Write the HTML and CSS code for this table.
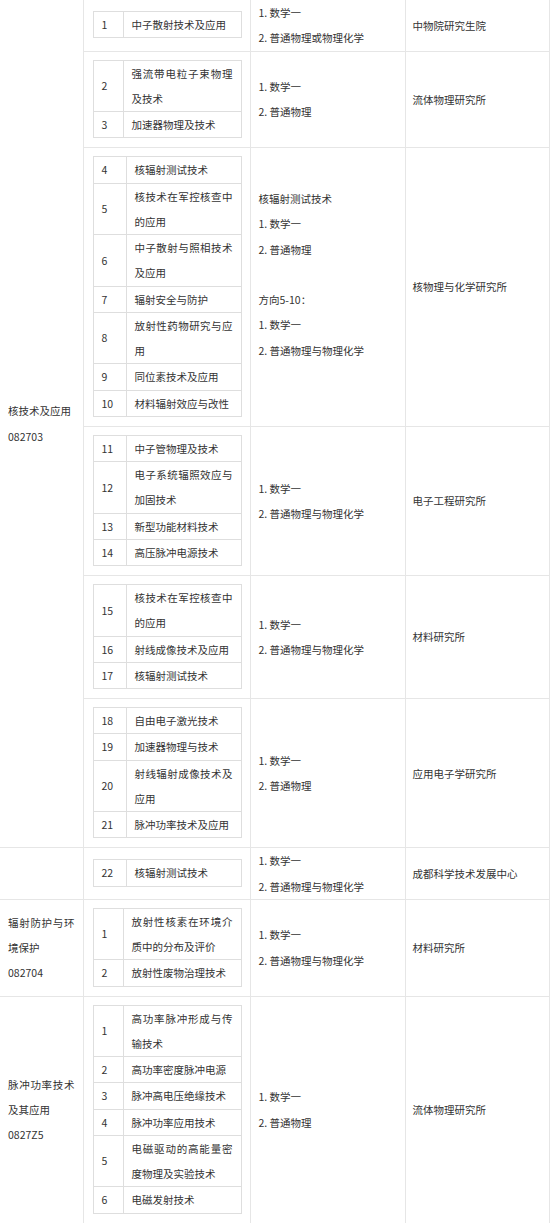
FILE: index.html
```html
<!DOCTYPE html>
<html lang="zh-CN">
<head>
<meta charset="utf-8">
<title>招生专业目录</title>
<link rel="stylesheet" href="styles.css">
</head>
<body>
<table class="plan">
  <colgroup>
    <col class="c-major">
    <col class="c-dir">
    <col class="c-exam">
    <col class="c-inst">
  </colgroup>
  <tbody>
    <tr>
      <td class="major" rowspan="6"><p>核技术及应用</p><p>082703</p></td>
      <td class="dirs">
        <table class="sub">
          <colgroup><col class="n"><col></colgroup>
          <tr><td class="num">1</td><td class="name">中子散射技术及应用</td></tr>
        </table>
      </td>
      <td class="exam"><p>1. 数学一</p><p>2. 普通物理或物理化学</p></td>
      <td class="inst">中物院研究生院</td>
    </tr>
    <tr>
      <td class="dirs">
        <table class="sub">
          <colgroup><col class="n"><col></colgroup>
          <tr><td class="num">2</td><td class="name">强流带电粒子束物理及技术</td></tr>
          <tr><td class="num">3</td><td class="name">加速器物理及技术</td></tr>
        </table>
      </td>
      <td class="exam"><p>1. 数学一</p><p>2. 普通物理</p></td>
      <td class="inst">流体物理研究所</td>
    </tr>
    <tr>
      <td class="dirs">
        <table class="sub sub-wide">
          <colgroup><col class="n"><col></colgroup>
          <tr><td class="num">4</td><td class="name">核辐射测试技术</td></tr>
          <tr><td class="num">5</td><td class="name">核技术在军控核查中的应用</td></tr>
          <tr><td class="num">6</td><td class="name">中子散射与照相技术及应用</td></tr>
          <tr><td class="num">7</td><td class="name">辐射安全与防护</td></tr>
          <tr><td class="num">8</td><td class="name">放射性药物研究与应用</td></tr>
          <tr><td class="num">9</td><td class="name">同位素技术及应用</td></tr>
          <tr><td class="num">10</td><td class="name">材料辐射效应与改性</td></tr>
        </table>
      </td>
      <td class="exam"><p>核辐射测试技术</p><p>1. 数学一</p><p>2. 普通物理</p><p class="blank"></p><p>方向5-10：</p><p>1. 数学一</p><p>2. 普通物理与物理化学</p><p class="blank"></p></td>
      <td class="inst">核物理与化学研究所</td>
    </tr>
    <tr>
      <td class="dirs">
        <table class="sub sub-wide">
          <colgroup><col class="n"><col></colgroup>
          <tr><td class="num">11</td><td class="name">中子管物理及技术</td></tr>
          <tr><td class="num">12</td><td class="name">电子系统辐照效应与加固技术</td></tr>
          <tr><td class="num">13</td><td class="name">新型功能材料技术</td></tr>
          <tr><td class="num">14</td><td class="name">高压脉冲电源技术</td></tr>
        </table>
      </td>
      <td class="exam"><p>1. 数学一</p><p>2. 普通物理与物理化学</p></td>
      <td class="inst">电子工程研究所</td>
    </tr>
    <tr>
      <td class="dirs">
        <table class="sub sub-wide">
          <colgroup><col class="n"><col></colgroup>
          <tr><td class="num">15</td><td class="name">核技术在军控核查中的应用</td></tr>
          <tr><td class="num">16</td><td class="name">射线成像技术及应用</td></tr>
          <tr><td class="num">17</td><td class="name">核辐射测试技术</td></tr>
        </table>
      </td>
      <td class="exam"><p>1. 数学一</p><p>2. 普通物理与物理化学</p></td>
      <td class="inst">材料研究所</td>
    </tr>
    <tr>
      <td class="dirs">
        <table class="sub sub-wide">
          <colgroup><col class="n"><col></colgroup>
          <tr><td class="num">18</td><td class="name">自由电子激光技术</td></tr>
          <tr><td class="num">19</td><td class="name">加速器物理与技术</td></tr>
          <tr><td class="num">20</td><td class="name">射线辐射成像技术及应用</td></tr>
          <tr><td class="num">21</td><td class="name">脉冲功率技术及应用</td></tr>
        </table>
      </td>
      <td class="exam"><p>1. 数学一</p><p>2. 普通物理</p></td>
      <td class="inst">应用电子学研究所</td>
    </tr>
    <tr>
      <td class="major"></td>
      <td class="dirs">
        <table class="sub sub-wide">
          <colgroup><col class="n"><col></colgroup>
          <tr><td class="num">22</td><td class="name">核辐射测试技术</td></tr>
        </table>
      </td>
      <td class="exam"><p>1. 数学一</p><p>2. 普通物理与物理化学</p></td>
      <td class="inst">成都科学技术发展中心</td>
    </tr>
    <tr>
      <td class="major"><p>辐射防护与环境保护</p><p>082704</p></td>
      <td class="dirs">
        <table class="sub">
          <colgroup><col class="n"><col></colgroup>
          <tr><td class="num">1</td><td class="name">放射性核素在环境介质中的分布及评价</td></tr>
          <tr><td class="num">2</td><td class="name">放射性废物治理技术</td></tr>
        </table>
      </td>
      <td class="exam"><p>1. 数学一</p><p>2. 普通物理与物理化学</p></td>
      <td class="inst">材料研究所</td>
    </tr>
    <tr>
      <td class="major"><p>脉冲功率技术及其应用</p><p>0827Z5</p></td>
      <td class="dirs">
        <table class="sub">
          <colgroup><col class="n"><col></colgroup>
          <tr><td class="num">1</td><td class="name">高功率脉冲形成与传输技术</td></tr>
          <tr><td class="num">2</td><td class="name">高功率密度脉冲电源</td></tr>
          <tr><td class="num">3</td><td class="name">脉冲高电压绝缘技术</td></tr>
          <tr><td class="num">4</td><td class="name">脉冲功率应用技术</td></tr>
          <tr><td class="num">5</td><td class="name">电磁驱动的高能量密度物理及实验技术</td></tr>
          <tr><td class="num">6</td><td class="name">电磁发射技术</td></tr>
        </table>
      </td>
      <td class="exam"><p>1. 数学一</p><p>2. 普通物理</p></td>
      <td class="inst">流体物理研究所</td>
    </tr>
  </tbody>
</table>
</body>
</html>
```
FILE: styles.css
```css
html, body {
  margin: 0;
  padding: 0;
  background: #ffffff;
}

body {
  font-family: "Noto Sans CJK SC", "Noto Sans", "Liberation Sans", sans-serif;
  font-size: 10.5px;
  line-height: 25.25px;
  color: #333333;
}

p {
  margin: 0;
}

.plan {
  border-collapse: collapse;
  table-layout: fixed;
  width: 549px;
}

.c-major { width: 83px; }
.c-dir { width: 167px; }
.c-exam { width: 155px; }
.c-inst { width: 144px; }

.plan > tbody > tr > td {
  border: 1px solid #e6e6e6;
  vertical-align: middle;
}

.plan > tbody > tr:first-child > td {
  border-top: none;
}

.plan > tbody > tr > td.major {
  border-left: none;
  padding: 0 8px 0 8px;
  text-align: justify;
}

.dirs {
  padding: 8px 8px 9px 9px;
}

.exam {
  padding: 0 8px;
}

.blank {
  height: 25.25px;
}

.inst {
  padding: 0 8px 0 7px;
}

.sub {
  border-collapse: collapse;
  table-layout: fixed;
  width: 149px;
}

.sub .n { width: 30px; }
.sub-wide .n { width: 33px; }

.sub td {
  border: 1px solid #dedede;
  padding: 0 8px;
  vertical-align: middle;
}

.sub td.name {
  text-align: justify;
}
```
